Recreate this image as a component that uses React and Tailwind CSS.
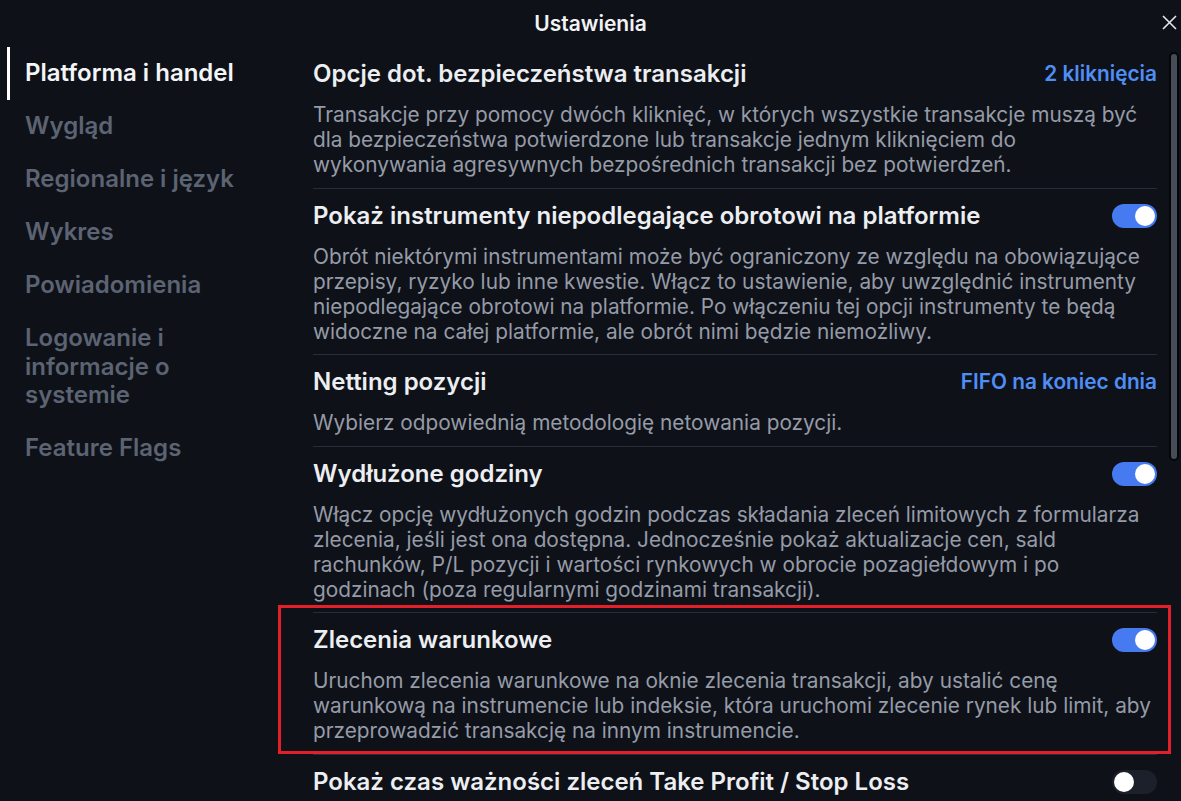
import React from "react";

const navItems = [
  "Platforma i handel",
  "Wygląd",
  "Regionalne i język",
  "Wykres",
  "Powiadomienia",
  "Logowanie i informacje o systemie",
  "Feature Flags",
];

const sections = [
  {
    title: "Opcje dot. bezpieczeństwa transakcji",
    link: "2 kliknięcia",
    desc: "Transakcje przy pomocy dwóch kliknięć, w których wszystkie transakcje muszą być dla bezpieczeństwa potwierdzone lub transakcje jednym kliknięciem do wykonywania agresywnych bezpośrednich transakcji bez potwierdzeń.",
  },
  {
    title: "Pokaż instrumenty niepodlegające obrotowi na platformie",
    toggle: true,
    desc: "Obrót niektórymi instrumentami może być ograniczony ze względu na obowiązujące przepisy, ryzyko lub inne kwestie. Włącz to ustawienie, aby uwzględnić instrumenty niepodlegające obrotowi na platformie. Po włączeniu tej opcji instrumenty te będą widoczne na całej platformie, ale obrót nimi będzie niemożliwy.",
  },
  {
    title: "Netting pozycji",
    link: "FIFO na koniec dnia",
    desc: "Wybierz odpowiednią metodologię netowania pozycji.",
  },
  {
    title: "Wydłużone godziny",
    toggle: true,
    desc: "Włącz opcję wydłużonych godzin podczas składania zleceń limitowych z formularza zlecenia, jeśli jest ona dostępna. Jednocześnie pokaż aktualizacje cen, sald rachunków, P/L pozycji i wartości rynkowych w obrocie pozagiełdowym i po godzinach (poza regularnymi godzinami transakcji).",
  },
  {
    title: "Zlecenia warunkowe",
    toggle: true,
    desc: "Uruchom zlecenia warunkowe na oknie zlecenia transakcji, aby ustalić cenę warunkową na instrumencie lub indeksie, która uruchomi zlecenie rynek lub limit, aby przeprowadzić transakcję na innym instrumencie.",
  },
  {
    title: "Pokaż czas ważności zleceń Take Profit / Stop Loss",
    toggle: false,
  },
];

const Toggle = ({ on }) => (
  <div
    className={`w-[45px] h-[24px] rounded-full flex items-center px-[2px] ${
      on ? "bg-[#457af0] justify-end" : "bg-[#1b202b] justify-start"
    }`}
  >
    <div className="w-[20px] h-[20px] rounded-full bg-white" />
  </div>
);

export default function App() {
  return (
    <div
      className="relative h-[801px] w-[1181px] overflow-hidden bg-[#0e1118] text-white"
      style={{ fontFamily: "Inter, 'Noto Sans', sans-serif" }}
    >
      <div className="h-[47px] flex items-center justify-center relative">
        <h1 className="text-[21px] font-semibold text-[#f2f3f5]">Ustawienia</h1>
        <button className="absolute right-[4px] top-[15px] text-[#e6e7ea]">
          <svg width="15" height="15" viewBox="0 0 15 15" fill="none" stroke="currentColor" strokeWidth="1.6">
            <path d="M1 1 L14 14 M14 1 L1 14" />
          </svg>
        </button>
      </div>

      <div className="flex">
        <nav className="w-[313px] shrink-0 pl-[7px]">
          {navItems.map((item, i) => (
            <div key={item} className="flex">
              <div className={`w-[3px] shrink-0 ${i === 0 ? "bg-white" : ""}`} />
              <div
                className={`pl-[15px] w-[240px] py-[12.25px] text-[24px] leading-[28.5px] font-semibold ${
                  i === 0 ? "text-[#f4f5f7]" : "text-[#5c6372]"
                }`}
              >
                {item}
              </div>
            </div>
          ))}
        </nav>

        <main className="w-[844px] shrink-0">
          {sections.map((s, i) => (
            <div key={s.title} className={`pt-3 pb-[10.5px] ${i > 0 ? "border-t border-[#262c38]" : ""}`}>
              <div className="flex items-center justify-between h-[30px]">
                <h2 className="text-[24px] font-semibold text-[#eceef1] whitespace-nowrap">{s.title}</h2>
                {s.link && (
                  <span className="text-[20.8px] font-semibold text-[#4f8ef5]">{s.link}</span>
                )}
                {s.toggle !== undefined && <Toggle on={s.toggle} />}
              </div>
              {s.desc && (
                <p className="mt-[13px] pr-[4px] text-[20.8px] leading-[25px] text-[#959ba7]">{s.desc}</p>
              )}
            </div>
          ))}
        </main>

        <div className="ml-[12px] mt-[5px] w-[10px] h-[409px] rounded-full bg-[#474c58] border-2 border-[#050608]" />
      </div>

      <div className="absolute left-[278px] top-[605px] w-[893px] h-[149px] border-[3px] border-[#e3202a] pointer-events-none" />
    </div>
  );
}
